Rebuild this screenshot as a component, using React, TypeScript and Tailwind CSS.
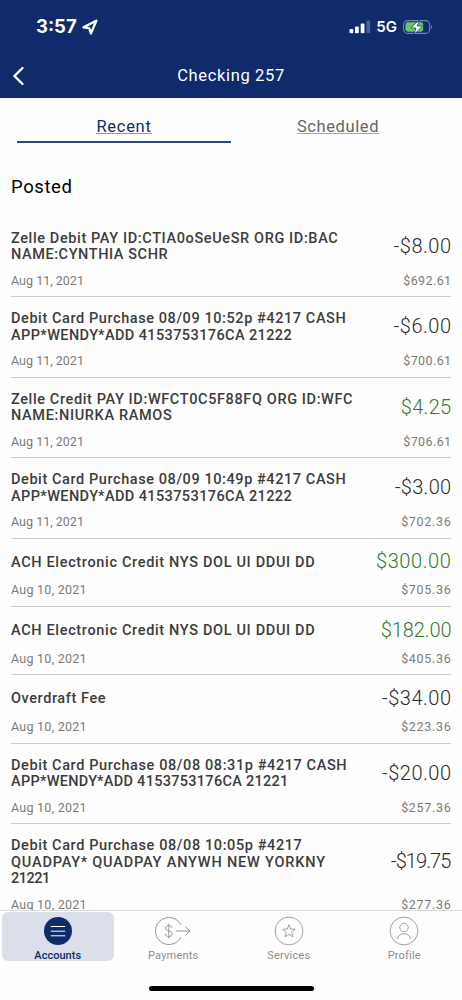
type Transaction = {
  lines: { text: string; tracking: string }[];
  date: string;
  amount: string;
  amountTracking?: string;
  balance: string;
  credit?: boolean;
};

const transactions: Transaction[] = [
  {
    lines: [
      { text: "Zelle Debit PAY ID:CTIA0oSeUeSR ORG ID:BAC", tracking: "tracking-[0.62px]" },
      { text: "NAME:CYNTHIA SCHR", tracking: "tracking-[0.58px]" },
    ],
    date: "Aug 11, 2021",
    amount: "-$8.00",
    balance: "$692.61",
  },
  {
    lines: [
      { text: "Debit Card Purchase 08/09 10:52p #4217 CASH", tracking: "tracking-[0.58px]" },
      { text: "APP*WENDY*ADD 4153753176CA 21222", tracking: "tracking-[0.4px]" },
    ],
    date: "Aug 11, 2021",
    amount: "-$6.00",
    balance: "$700.61",
  },
  {
    lines: [
      { text: "Zelle Credit PAY ID:WFCT0C5F88FQ ORG ID:WFC", tracking: "tracking-[0.62px]" },
      { text: "NAME:NIURKA RAMOS", tracking: "tracking-[0.65px]" },
    ],
    date: "Aug 11, 2021",
    amount: "$4.25",
    amountTracking: "tracking-[0.3px]",
    balance: "$706.61",
    credit: true,
  },
  {
    lines: [
      { text: "Debit Card Purchase 08/09 10:49p #4217 CASH", tracking: "tracking-[0.58px]" },
      { text: "APP*WENDY*ADD 4153753176CA 21222", tracking: "tracking-[0.4px]" },
    ],
    date: "Aug 11, 2021",
    amount: "-$3.00",
    amountTracking: "tracking-[0.3px]",
    balance: "$702.36",
  },
  {
    lines: [{ text: "ACH Electronic Credit NYS DOL UI DDUI DD", tracking: "tracking-[0.66px]" }],
    date: "Aug 10, 2021",
    amount: "$300.00",
    amountTracking: "tracking-[0.6px]",
    balance: "$705.36",
    credit: true,
  },
  {
    lines: [{ text: "ACH Electronic Credit NYS DOL UI DDUI DD", tracking: "tracking-[0.66px]" }],
    date: "Aug 10, 2021",
    amount: "$182.00",
    amountTracking: "tracking-[-0.1px]",
    balance: "$405.36",
    credit: true,
  },
  {
    lines: [{ text: "Overdraft Fee", tracking: "tracking-[0.58px]" }],
    date: "Aug 10, 2021",
    amount: "-$34.00",
    balance: "$223.36",
  },
  {
    lines: [
      { text: "Debit Card Purchase 08/08 08:31p #4217 CASH", tracking: "tracking-[0.6px]" },
      { text: "APP*WENDY*ADD 4153753176CA 21221", tracking: "tracking-[0.29px]" },
    ],
    date: "Aug 10, 2021",
    amount: "-$20.00",
    balance: "$257.36",
  },
  {
    lines: [
      { text: "Debit Card Purchase 08/08 10:05p #4217", tracking: "tracking-[0.6px]" },
      { text: "QUADPAY* QUADPAY ANYWH NEW YORKNY", tracking: "tracking-[0.82px]" },
      { text: "21221", tracking: "tracking-[-0.5px]" },
    ],
    date: "Aug 10, 2021",
    amount: "-$19.75",
    amountTracking: "tracking-[-0.9px] pr-px",
    balance: "$277.36",
  },
];

function StatusBar() {
  return (
    <div className="flex h-[53px] items-center pl-9 pr-[29px] text-white font-['Inter',sans-serif]">
      <span className="text-[18.5px] font-bold leading-none">3:57</span>
      <svg className="ml-[5px] h-4 w-4" viewBox="0 0 16 16" fill="none">
        <path d="M14.3 1.7L1.5 8.2l5.6.9 1.9 5.3z" stroke="currentColor" strokeWidth="2.4" strokeLinejoin="round" />
      </svg>
      <div className="ml-auto flex items-center">
        <svg className="h-[14px] w-[22px]" viewBox="0 0 22 14" fill="currentColor">
          <rect x="0.5" y="9" width="3.8" height="4.3" rx="1" />
          <rect x="6" y="6.5" width="3.8" height="6.8" rx="1" />
          <rect x="11.7" y="3.5" width="3.8" height="9.8" rx="1" />
          <rect x="17.4" y="0.5" width="3.8" height="12.8" rx="1" opacity="0.25" />
        </svg>
        <span className="ml-[5px] text-[15px] font-semibold leading-none">5G</span>
        <svg className="ml-1.5 h-4 w-[30px]" viewBox="0 0 30 16" fill="none">
          <rect x="0.6" y="1.6" width="26" height="12.8" rx="4" stroke="#7187b5" strokeWidth="1.1" />
          <rect x="2.4" y="3.3" width="17.8" height="9.4" rx="2.4" fill="#67c766" />
          <path d="M28 5.8v4.4c1.4-.7 1.4-3.7 0-4.4z" fill="#7187b5" />
          <path d="M16.3.8L7.8 9H13l-2 6.4L19.6 7h-5.4z" fill="#fff" stroke="#102b6c" strokeWidth="0.7" />
        </svg>
      </div>
    </div>
  );
}

function TransactionRow({ item }: { item: Transaction }) {
  return (
    <li className="border-b border-[#cdcdcd] pt-[13.9px] pb-[7.5px]">
      <div className="flex min-h-[21px] items-center justify-between">
        <div className="text-[14.5px] font-medium leading-[16.5px] text-[#3c3c3c]">
          {item.lines.map((line) => (
            <p key={line.text} className={`whitespace-nowrap ${line.tracking}`}>
              {line.text}
            </p>
          ))}
        </div>
        <span
          className={`-mr-[0.5px] mb-[1.5px] text-[20px] font-light leading-[19.5px] ${
            item.amountTracking ?? "tracking-[0.5px]"
          } ${item.credit ? "text-[#2f7a2d]" : "text-[#2b2b2b]"}`}
        >
          {item.amount}
        </span>
      </div>
      <div className="mt-[9px] flex justify-between text-[12.5px] leading-4 text-[#7b7b7b]">
        <span className={item.date.startsWith("Aug 11") ? "tracking-[0.01px]" : "tracking-[0.25px]"}>
          {item.date}
        </span>
        <span className={`-mr-[0.5px] ${item.balance.endsWith("1") ? "tracking-[0.4px]" : "tracking-[0.7px]"}`}>
          {item.balance}
        </span>
      </div>
    </li>
  );
}

function AccountsIcon() {
  return (
    <svg className="h-[30px] w-[30px] shrink-0" viewBox="0 0 30 30">
      <circle cx="15" cy="15" r="14" fill="#102b6c" />
      <path d="M7.8 10.5h14.4M7.8 15.2h14.4M7.8 19.8h14.4" stroke="#fff" strokeWidth="1" />
    </svg>
  );
}

function PaymentsIcon() {
  return (
    <svg className="h-[30px] w-[38px] shrink-0" viewBox="0 0 38 30" fill="none" stroke="#969696" strokeWidth="1">
      <path d="M27 8.9A13.5 13.5 0 1 0 27 21.1" />
      <path d="M22 15H36M31.5 10.6L36 15l-4.5 4.4" />
      <path d="M17.9 11.8c-.3-1.5-1.5-2.3-3.2-2.3-1.8 0-3.1 1-3.1 2.6 0 3.7 6.5 2 6.5 5.7 0 1.7-1.4 2.8-3.3 2.8-1.9 0-3.3-1-3.5-2.7M14.8 7.7v14.8" />
    </svg>
  );
}

function ServicesIcon() {
  return (
    <svg className="h-[30px] w-[30px] shrink-0" viewBox="0 0 30 30" fill="none" stroke="#888888" strokeWidth="0.8">
      <circle cx="15" cy="15" r="13.9" />
      <path d="M15 8.6l1.7 4.4 4.6.3-3.6 2.9 1.2 4.6-3.9-2.5-3.9 2.5 1.2-4.6-3.6-2.9 4.6-.3z" />
    </svg>
  );
}

function ProfileIcon() {
  return (
    <svg className="h-[30px] w-[30px] shrink-0" viewBox="0 0 30 30" fill="none" stroke="#888888" strokeWidth="0.8">
      <circle cx="15" cy="15" r="13.9" />
      <circle cx="15" cy="11.5" r="4.2" />
      <path d="M8.7 23c.4-3.4 2.9-5.3 6.3-5.3s5.9 1.9 6.3 5.3" />
    </svg>
  );
}

const tabs = [
  { label: "Accounts", icon: <AccountsIcon />, active: true },
  { label: "Payments", icon: <PaymentsIcon /> },
  { label: "Services", icon: <ServicesIcon /> },
  { label: "Profile", icon: <ProfileIcon /> },
];

export default function App() {
  return (
    <div className="flex h-[1000px] w-[462px] flex-col overflow-hidden bg-[#fefefe] font-['Roboto',sans-serif]">
      <header className="h-[98px] shrink-0 bg-[#102b6c] text-white">
        <StatusBar />
        <div className="grid h-[45px] grid-cols-[40px_1fr_40px] items-center">
          <button className="pl-[11px]">
            <svg className="h-5 w-4" viewBox="0 0 16 20" fill="none">
              <path d="M11.5 2L3.5 10l8 8" stroke="currentColor" strokeWidth="2.4" strokeLinecap="round" />
            </svg>
          </button>
          <h1 className="text-center text-[16.5px] leading-5 tracking-[0.65px]">Checking 257</h1>
        </div>
      </header>

      <div className="grid shrink-0 grid-cols-2 px-[17px] text-center text-[16.5px]">
        <div className="h-[45px] border-b-2 border-[#2b4a82] pt-[19px] leading-5 text-[#122c6a]">
          <span className="inline-block h-[17px] border-b border-[#8f9bb5] leading-5 tracking-[0.7px]">Recent</span>
        </div>
        <div className="h-[45px] pt-[19px] leading-5 text-[#666666]">
          <span className="inline-block h-[17px] border-b border-[#a8a8a8] leading-5 tracking-[0.6px]">Scheduled</span>
        </div>
      </div>

      <main className="min-h-0 flex-1 overflow-hidden px-[11px]">
        <h2 className="h-[74px] pt-8 text-[18.5px] leading-6 tracking-[0.6px] text-black">Posted</h2>
        <ul>
          {transactions.map((item, i) => (
            <TransactionRow key={i} item={item} />
          ))}
        </ul>
      </main>

      <nav className="h-[90px] shrink-0 border-t border-[#d9dcdc]">
        <div className="grid grid-cols-4 pt-px">
          {tabs.map((tab) => (
            <div
              key={tab.label}
              className={`mx-[2px] flex h-[49px] flex-col items-center rounded-md pt-1 text-[11px] leading-[14px] ${
                tab.active
                  ? "bg-[#dadfe9] font-medium tracking-[0.03px] text-[#102b6c]"
                  : "tracking-[0.2px] text-[#8c8c8c]"
              }`}
            >
              {tab.icon}
              <span className="mt-[3px]">{tab.label}</span>
            </div>
          ))}
        </div>
        <div className="mx-auto mt-[25px] h-[5px] w-[165px] rounded-full bg-black" />
      </nav>
    </div>
  );
}
